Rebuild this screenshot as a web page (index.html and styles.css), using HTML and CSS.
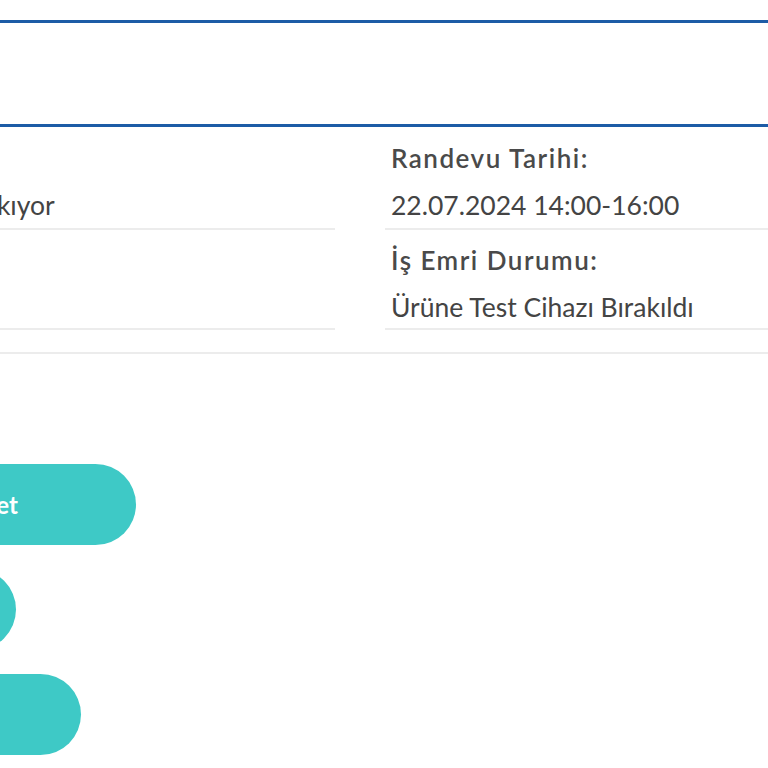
FILE: index.html
```
<!DOCTYPE html>
<html lang="tr">
<head>
    <meta charset="UTF-8">
    <meta name="viewport" content="width=device-width, initial-scale=1.0">
    <title>İş Emri Detayı</title>
    <link rel="stylesheet" href="styles.css">
</head>
<body>

    <div class="page">

        <!-- başlık alanı -->
        <div class="header-band"></div>

        <!-- bilgi satırları -->
        <div class="info-grid">
            <div class="info-col info-col-left">
                <div class="info-item">
                    <div class="info-label">Randevu Durumu:</div>
                    <div class="info-value">Teknisyen Adrese Yola Çıkıyor</div>
                </div>
                <div class="info-item">
                    <div class="info-label">Teknisyen:</div>
                    <div class="info-value"></div>
                </div>
            </div>
            <div class="info-col">
                <div class="info-item">
                    <div class="info-label">Randevu Tarihi:</div>
                    <div class="info-value">22.07.2024 14:00-16:00</div>
                </div>
                <div class="info-item">
                    <div class="info-label">İş Emri Durumu:</div>
                    <div class="info-value">Ürüne Test Cihazı Bırakıldı</div>
                </div>
            </div>
        </div>

        <!-- butonlar -->
        <div class="actions">
            <button class="pill pill-wide">Onayla ve devam et</button>
            <button class="pill pill-short">Geri dön</button>
            <button class="pill pill-mid">İptal et</button>
        </div>

    </div>

</body>
</html>
```

FILE: styles.css
```
body {
    margin: 0;
    background-color: #ffffff;
    font-family: Lato, "Open Sans", sans-serif;
    color: #444444;
    overflow: hidden;
}
.page {
    width: 1400px;
    margin-left: -310px;
    padding-top: 20px;
}
.header-band {
    height: 101px;
    border-top: 3px solid #1d5ca6;
    border-bottom: 3px solid #1d5ca6;
}
.info-grid {
    display: grid;
    grid-template-columns: 645px 645px;
    column-gap: 50px;
    padding-bottom: 22px;
    border-bottom: 2px solid #ececec;
}
.info-item {
    padding: 13px 6px 5px;
    border-bottom: 2px solid #ececec;
}
.info-item + .info-item {
    padding-top: 12px;
    padding-bottom: 3px;
}
.info-col-left .info-item {
    padding-left: 21px;
}
.info-label {
    font-size: 26px;
    font-weight: 600;
    letter-spacing: 1.5px;
    color: #4a4a4a;
    line-height: 36px;
    margin-bottom: 11px;
}
.info-value {
    font-size: 26.5px;
    line-height: 36px;
    min-height: 36px;
}
.actions {
    display: flex;
    flex-direction: column;
    align-items: flex-start;
    gap: 24px;
    padding-top: 110px;
}
.pill {
    height: 81px;
    border: none;
    border-radius: 41px;
    background-color: #3ec9c6;
    color: #ffffff;
    font-family: Lato, sans-serif;
    font-size: 24px;
    font-weight: bold;
    padding: 0 30px;
}
.pill-wide {
    width: 446px;
}
.pill-short {
    width: 326px;
}
.pill-mid {
    width: 391px;
}
```
